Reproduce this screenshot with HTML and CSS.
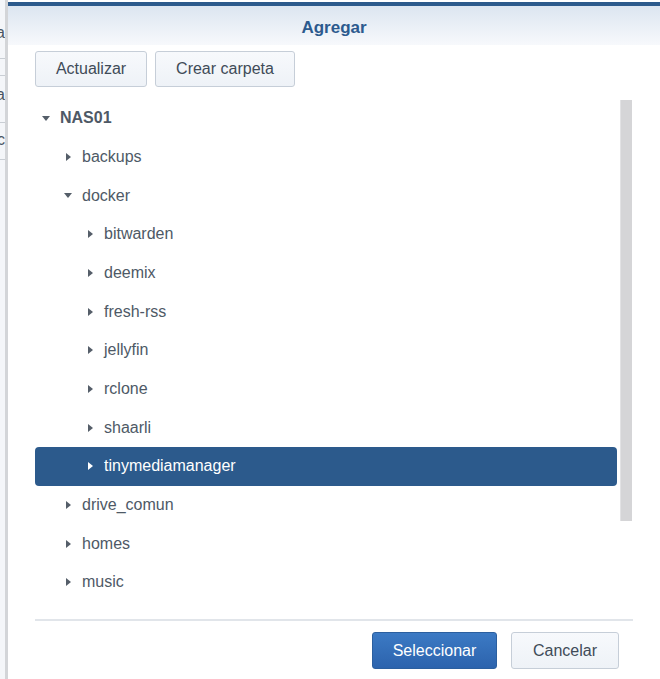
FILE: index.html
```html
<!DOCTYPE html>
<html lang="es">
<head>
  <meta charset="UTF-8">
  <title>Agregar</title>
  <link rel="stylesheet" href="styles.css">
</head>
<body>
  <div class="backdrop">
    <div class="bg-row first"><span>Extra</span></div>
    <div class="bg-row thin"><span></span></div>
    <div class="bg-row tall"><span>Carpeta</span></div>
    <div class="bg-row last"><span>/volume1/c</span></div>
  </div>

  <div class="dialog">
    <div class="dialog-header">Agregar</div>

    <div class="toolbar">
      <button class="btn">Actualizar</button>
      <button class="btn">Crear carpeta</button>
    </div>

    <div class="tree">
      <div class="node level-0 open"><span class="arrow"></span><span class="label root">NAS01</span></div>
      <div class="node level-1"><span class="arrow"></span><span class="label">backups</span></div>
      <div class="node level-1 open"><span class="arrow"></span><span class="label">docker</span></div>
      <div class="node level-2"><span class="arrow"></span><span class="label">bitwarden</span></div>
      <div class="node level-2"><span class="arrow"></span><span class="label">deemix</span></div>
      <div class="node level-2"><span class="arrow"></span><span class="label">fresh-rss</span></div>
      <div class="node level-2"><span class="arrow"></span><span class="label">jellyfin</span></div>
      <div class="node level-2"><span class="arrow"></span><span class="label">rclone</span></div>
      <div class="node level-2"><span class="arrow"></span><span class="label">shaarli</span></div>
      <div class="node level-2 selected"><span class="arrow"></span><span class="label">tinymediamanager</span></div>
      <div class="node level-1"><span class="arrow"></span><span class="label">drive_comun</span></div>
      <div class="node level-1"><span class="arrow"></span><span class="label">homes</span></div>
      <div class="node level-1"><span class="arrow"></span><span class="label">music</span></div>
      <div class="scrollbar"></div>
    </div>

    <div class="dialog-footer">
      <button class="btn primary">Seleccionar</button>
      <button class="btn cancel">Cancelar</button>
    </div>
  </div>
</body>
</html>
```

FILE: styles.css
```css
* { margin: 0; padding: 0; box-sizing: border-box; }
body {
  font-family: 'Liberation Sans', Arial, sans-serif;
  background: #ffffff;
  width: 660px;
  height: 679px;
  overflow: hidden;
  display: flex;
}

/* ventana de fondo, casi oculta */
.backdrop {
  width: 8px;
  flex-shrink: 0;
  background: #f4f6f9;
  border-right: 3px solid #d3d5d8;
  overflow: hidden;
  font-size: 16px;
  line-height: 18px;
  color: #4a5563;
}
.bg-row {
  display: flex;
  justify-content: flex-end;
  border-bottom: 1px solid #c9ced4;
  white-space: nowrap;
}
.bg-row.first { height: 59px; padding-top: 24px; }
.bg-row.thin { height: 17px; }
.bg-row.tall { height: 47px; padding-top: 10px; }
.bg-row.last { height: 37px; padding-top: 8px; }

.dialog {
  flex: 1;
  display: flex;
  flex-direction: column;
  padding-top: 2px;
  background: #fff;
}
.dialog-header {
  border-top: 4px solid #2c5a8c;
  height: 43px;
  background: linear-gradient(180deg, #dce5f0 0%, #f7f9fc 100%);
  color: #2c5a8e;
  font-size: 17px;
  font-weight: bold;
  text-align: center;
  line-height: 44px;
}

.toolbar {
  display: flex;
  gap: 8px;
  padding: 6px 27px 0;
}
.btn {
  font-family: inherit;
  font-size: 16px;
  color: #3f4b58;
  height: 36px;
  padding: 0 20px;
  border: 1px solid #c6ced8;
  border-radius: 3px;
  background: linear-gradient(180deg, #f7f9fc 0%, #eef2f7 100%);
}
.toolbar .btn:first-child { width: 112px; padding: 0; }
.toolbar .btn:last-child { width: 140px; padding: 0; }

.tree {
  position: relative;
  margin: 12px 27px 0;
  height: 520px;
  overflow: hidden;
}
.node {
  height: 38.67px;
  display: flex;
  align-items: center;
  width: 582px;
  font-size: 16px;
  color: #4e5966;
}
.node.level-0 { padding-left: 5px; }
.node.level-1 { padding-left: 27px; }
.node.level-2 { padding-left: 49px; }
.arrow {
  width: 12px;
  height: 12px;
  display: flex;
  align-items: center;
  justify-content: center;
  margin-right: 8px;
}
.arrow::before {
  content: "";
  border-left: 5px solid #555e69;
  border-top: 4px solid transparent;
  border-bottom: 4px solid transparent;
}
.node.open .arrow::before {
  border-top: 5px solid #555e69;
  border-left: 4.5px solid transparent;
  border-right: 4.5px solid transparent;
  border-bottom: none;
}
.label.root { font-weight: bold; }
.node.selected {
  background: #2c5a8c;
  border-radius: 4px;
  color: #ffffff;
}
.node.selected .arrow::before { border-left-color: #ffffff; }

.scrollbar {
  position: absolute;
  top: 1px;
  left: 585px;
  width: 12px;
  height: 421px;
  background: #d5d5d7;
  border-left: 1px solid #e2e2e4;
}

.dialog-footer {
  margin: 0 27px;
  border-top: 2px solid #e1e5ea;
  display: flex;
  justify-content: flex-end;
  gap: 14px;
  padding: 11px 14px 0 0;
}
.dialog-footer .btn { height: 37px; }
.btn.primary {
  width: 125px;
  padding: 0;
  color: #ffffff;
  border-color: #2b5f9f;
  background: linear-gradient(180deg, #3c7ac4 0%, #2c63ad 100%);
}
.btn.cancel { width: 108px; padding: 0; }
```
